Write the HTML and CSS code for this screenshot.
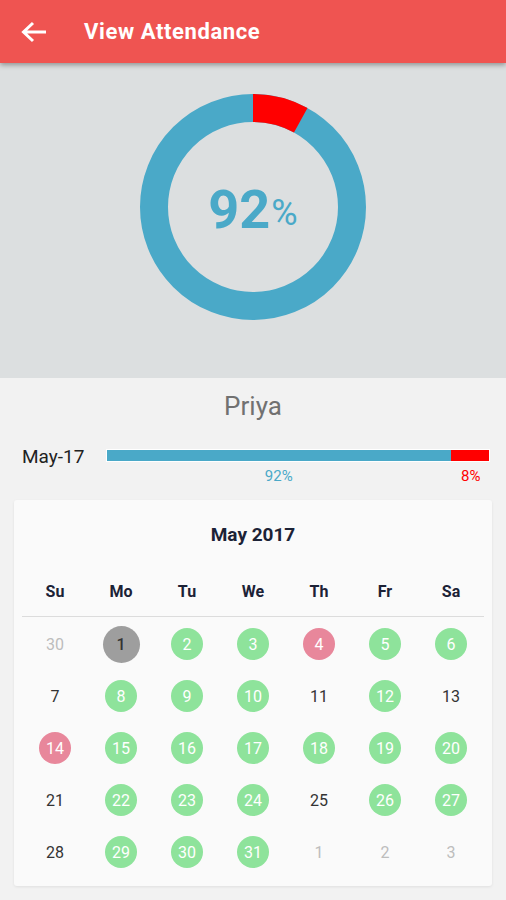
FILE: index.html
```html
<!DOCTYPE html>
<html lang="en">
  <head>
    <meta charset="UTF-8" />
    <meta name="viewport" content="width=device-width, initial-scale=1.0" />
    <title>View Attendance</title>
    <link rel="stylesheet" href="styles.css">
  </head>
  <body>
    <header class="topbar">
      <svg class="back" width="26" height="22" viewBox="0 0 26 22">
        <path d="M25 11H3M12 2L2.5 11L12 20" fill="none" stroke="#fff" stroke-width="3" />
      </svg>
      <h1>View Attendance</h1>
    </header>

    <section class="summary">
      <div class="donut">
        <svg width="226" height="226" viewBox="0 0 226 226">
          <circle cx="113" cy="113" r="99" fill="none" stroke="#4aa9c8" stroke-width="28" />
          <circle cx="113" cy="113" r="99" fill="none" stroke="#ff0000" stroke-width="28"
            stroke-dasharray="49.8 600" transform="rotate(-90 113 113)" />
        </svg>
        <div class="percent"><span class="big">92</span><span class="sign">%</span></div>
      </div>
    </section>

    <main class="details">
      <h2 class="name">Priya</h2>

      <div class="month-row">
        <span class="month">May-17</span>
        <div class="bar-wrap">
          <div class="bar">
            <div class="present" style="width: 90%"></div>
            <div class="absent" style="width: 10%"></div>
          </div>
          <div class="bar-labels">
            <span class="lbl-present" style="width: 90%">92%</span>
            <span class="lbl-absent" style="width: 10%">8%</span>
          </div>
        </div>
      </div>

      <article class="calendar">
        <h3>May 2017</h3>
        <div class="weekdays">
          <span>Su</span><span>Mo</span><span>Tu</span><span>We</span><span>Th</span><span>Fr</span><span>Sa</span>
        </div>
        <div class="days" id="days"></div>
      </article>
    </main>

    <script>
      // 30 april .. 3 june, status per dag
      const dage = [
        [30, "ude"], [1, "grå"], [2, "ja"], [3, "ja"], [4, "nej"], [5, "ja"], [6, "ja"],
        [7, ""], [8, "ja"], [9, "ja"], [10, "ja"], [11, ""], [12, "ja"], [13, ""],
        [14, "nej"], [15, "ja"], [16, "ja"], [17, "ja"], [18, "ja"], [19, "ja"], [20, "ja"],
        [21, ""], [22, "ja"], [23, "ja"], [24, "ja"], [25, ""], [26, "ja"], [27, "ja"],
        [28, ""], [29, "ja"], [30, "ja"], [31, "ja"], [1, "ude"], [2, "ude"], [3, "ude"],
      ];
      const klasser = { ude: "other", "grå": "today", ja: "present", nej: "absent" };

      const holder = document.querySelector("#days");
      dage.forEach(([tal, status]) => {
        const celle = document.createElement("div");
        celle.className = "day";
        const tekst = document.createElement("span");
        tekst.textContent = tal;
        if (status) tekst.className = klasser[status];
        celle.appendChild(tekst);
        holder.appendChild(celle);
      });
    </script>
  </body>
</html>
```

FILE: styles.css
```css
body {
  margin: 0;
  font-family: Roboto, "Noto Sans", sans-serif;
  background-color: #f2f2f2;
  height: 900px;
  overflow: hidden;
}

.topbar {
  height: 63px;
  background-color: #ef5451;
  display: flex;
  align-items: center;
  padding-left: 21px;
  gap: 37px;
  box-shadow: 0 2px 5px rgba(0, 0, 0, 0.35);
  position: relative;
  z-index: 1;
}

.back {
  margin-top: 1px;
}

.topbar h1 {
  margin: 0;
  color: #fff;
  font-size: 22px;
  font-weight: 700;
  letter-spacing: 0.6px;
}

.summary {
  background-color: #dcdfe0;
  height: 315px;
  display: flex;
  justify-content: center;
  padding-top: 31px;
  box-sizing: border-box;
}

.donut {
  position: relative;
  width: 226px;
  height: 226px;
}

.percent {
  position: absolute;
  inset: 0;
  display: flex;
  justify-content: center;
  align-items: center;
  color: #4aa9c8;
  padding-top: 4px;
}

.big {
  font-size: 54px;
  font-weight: 700;
}

.sign {
  font-size: 36px;
  margin-left: 1px;
  padding-top: 8px;
}

.details {
  padding: 0 14px;
}

.name {
  margin: 0;
  height: 56px;
  line-height: 56px;
  text-align: center;
  font-size: 26px;
  font-weight: 400;
  color: #717171;
}

.month-row {
  display: flex;
  align-items: flex-start;
  height: 66px;
  padding-left: 8px;
  padding-top: 15px;
  box-sizing: border-box;
}

.month {
  width: 84px;
  font-size: 19px;
  color: #222;
  line-height: 16px;
  margin-top: 0;
}

.bar-wrap {
  width: 384px;
}

.bar {
  display: flex;
  height: 13px;
  border: 1px solid #fff;
  box-sizing: border-box;
}

.bar .present {
  background-color: #4aa9c8;
}

.bar .absent {
  background-color: #ff0000;
}

.bar-labels {
  display: flex;
  font-size: 15px;
  margin-top: 5px;
}

.bar-labels span {
  text-align: center;
}

.lbl-present {
  color: #4aa9c8;
}

.lbl-absent {
  color: #f00;
}

.calendar {
  background-color: #fafafa;
  border-radius: 3px;
  box-shadow: 0 1px 3px rgba(0, 0, 0, 0.08);
  padding: 0 8px 8px;
}

.calendar h3 {
  margin: 0;
  height: 70px;
  line-height: 70px;
  text-align: center;
  font-size: 19px;
  font-weight: 700;
  color: #1c2236;
}

.weekdays {
  display: grid;
  grid-template-columns: repeat(7, 1fr);
  height: 47px;
  line-height: 44px;
  border-bottom: 1px solid #dcdcdc;
  box-sizing: border-box;
  text-align: center;
  font-size: 16px;
  font-weight: 700;
  color: #1c2236;
}

.days {
  display: grid;
  grid-template-columns: repeat(7, 1fr);
  grid-auto-rows: 52px;
  padding-top: 1px;
}

.day {
  display: flex;
  justify-content: center;
  align-items: center;
  font-size: 16px;
  color: #333;
}

.day span {
  display: flex;
  justify-content: center;
  align-items: center;
  width: 32px;
  height: 32px;
  border-radius: 50%;
}

.day .other {
  color: #bdbdbd;
}

.day .present {
  background-color: #8ee39b;
  color: #fff;
}

.day .absent {
  background-color: #e8879b;
  color: #fff;
}

.day .today {
  background-color: #9e9e9e;
  color: #333;
  width: 37px;
  height: 37px;
  font-weight: 500;
}
```
